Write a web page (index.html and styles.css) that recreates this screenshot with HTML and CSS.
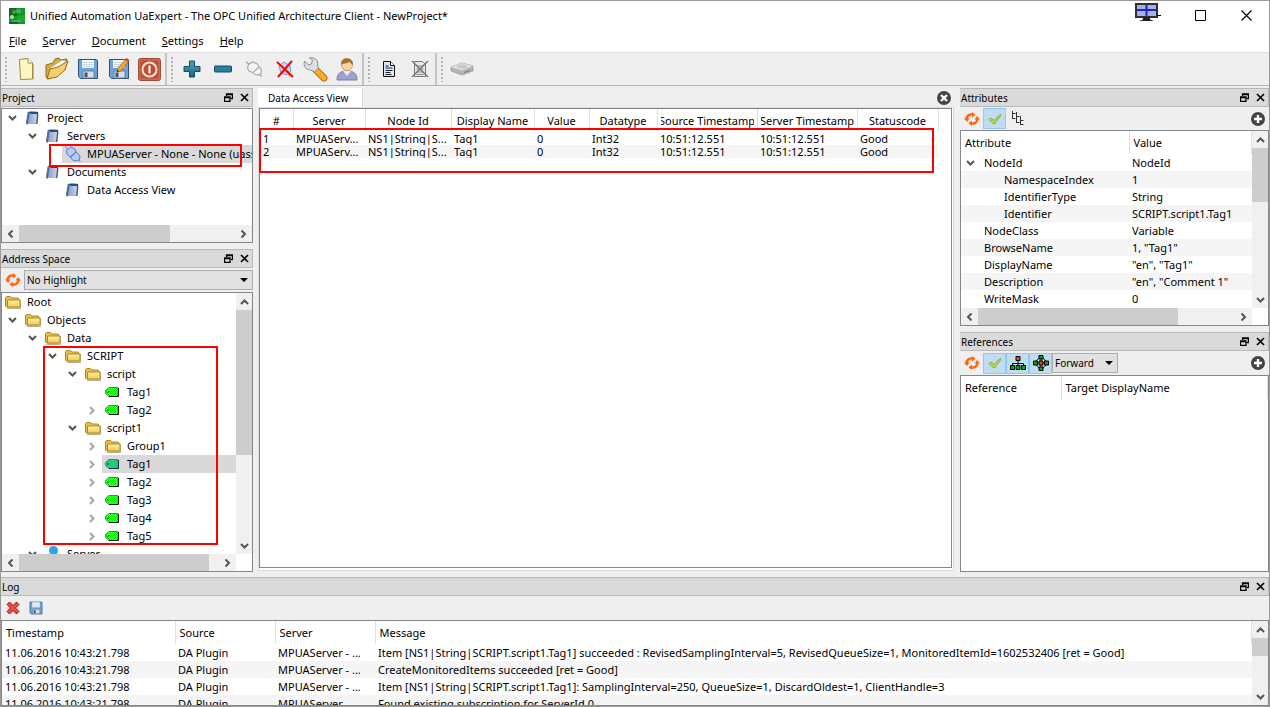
FILE: index.html
```html
<!DOCTYPE html>
<html lang="en">
<head>
    <meta charset="UTF-8">
    <meta name="viewport" content="width=device-width, initial-scale=1.0">
    <title>Unified Automation UaExpert</title>
    <link rel="stylesheet" href="styles.css">
</head>
<body>
    <!-- shared icons -->
    <svg class="sprite" width="0" height="0" aria-hidden="true">
        <defs>
            <linearGradient id="gFolder" x1="0" y1="0" x2="0" y2="1">
                <stop offset="0" stop-color="#fff3b0"/><stop offset="1" stop-color="#f0c850"/>
            </linearGradient>
            <linearGradient id="gBook" x1="0" y1="0" x2="1" y2="0">
                <stop offset="0" stop-color="#7f95c0"/><stop offset="1" stop-color="#d0dbee"/>
            </linearGradient>
            <linearGradient id="gBlue" x1="0" y1="0" x2="0" y2="1">
                <stop offset="0" stop-color="#4fa3c4"/><stop offset="1" stop-color="#1c6283"/>
            </linearGradient>
            <pattern id="pTag" width="2" height="2" patternUnits="userSpaceOnUse">
                <rect width="2" height="2" fill="#b4c4b4"/><rect width="1" height="1" fill="#00f000"/><rect x="1" y="1" width="1" height="1" fill="#00f000"/>
            </pattern>
            <pattern id="pTagSel" width="2" height="2" patternUnits="userSpaceOnUse">
                <rect width="2" height="2" fill="#6a9ec0"/><rect width="1" height="1" fill="#20c878"/><rect x="1" y="1" width="1" height="1" fill="#20c878"/>
            </pattern>
        </defs>
        <symbol id="down" viewBox="0 0 9 6"><path d="M1 1l3.500 3.500L8 1" fill="none" stroke="#555" stroke-width="2"/></symbol>
        <symbol id="right" viewBox="0 0 6 9"><path d="M1 1l3.500 3.500L1 8" fill="none" stroke="#a6a6a6" stroke-width="2"/></symbol>
        <symbol id="folder" viewBox="0 0 16 14">
            <path d="M2 13.500h13.500V5" fill="none" stroke="#8a7a50" stroke-width="1" opacity=".6"/>
            <path d="M.5 11V2.500l1-1h4l1.500 1.500h6l1 1v8H1.500z" fill="#e8bf4a" stroke="#b08820"/>
            <path d="M2.500 5h12.500v7H2.500z" fill="url(#gFolder)" stroke="#b08820"/>
        </symbol>
        <symbol id="book" viewBox="0 0 14 14">
            <path d="M3 1h10v2l-1 9.500H1.500z" fill="url(#gBook)" stroke="#8496b4" stroke-width=".6"/>
            <path d="M2.500 1.500L6 .5l7 .5v2L6 3z" fill="#1d4f82"/>
            <path d="M2.700 2L1 12.500l1.700 1.500L4.500 3z" fill="#4d6a94"/>
            <path d="M12.700 3l-1 10" stroke="#3c4a64" stroke-width="1.200"/>
        </symbol>
        <symbol id="plug" viewBox="0 0 16 16">
            <g fill="#b4ccf8" stroke="#5578c8"><path d="M1.500 4.500L5.500 1l4.500 2 1 3-6 5-3-2.500z"/><path d="M5.500 11.500L11.500 6l3.500 4-.5 3.500-3 1.500-3.500-.5z"/><path d="M.5.5l2 3M13.500 14l2 1.500" fill="none"/></g>
        </symbol>
        <symbol id="tag" viewBox="0 0 14 10">
            <path d="M4 .5h9v9H4L.5 6.500v-3z" fill="url(#pTag)" stroke="#707070"/><path d="M13.500 1v8.500H4" fill="none" stroke="#111"/><rect x="2" y="4" width="2" height="2" fill="#00c800"/>
        </symbol>
        <symbol id="tagsel" viewBox="0 0 14 10">
            <path d="M4 .5h9v9H4L.5 6.500v-3z" fill="url(#pTagSel)" stroke="#4878a0"/><path d="M13.500 1v8.500H4" fill="none" stroke="#103050"/><rect x="2" y="4" width="2" height="2" fill="#108860"/>
        </symbol>
        <symbol id="people" viewBox="0 0 16 16">
            <path d="M0 11c0-4 5-4 6-2v5H0z" fill="#f09060"/><path d="M10 9c1-2 6-2 6 2v3h-6z" fill="#60c070"/><circle cx="8.500" cy="4.500" r="4.500" fill="#28a8e8"/><path d="M4 15c0-7 9-7 9 0z" fill="#3c98d0"/>
        </symbol>
        <symbol id="refresh" viewBox="0 0 16 14">
            <g fill="none" stroke="#ff6410" stroke-width="2.400"><path d="M2.500 7.500C2.500 4 5 2 8.500 2.500"/><path d="M13.500 6.500c0 3.500-2.500 5.500-6 5"/></g>
            <path d="M0 6.500h5.500L3 10zM16 7.500h-5.500L13 4zM8 0l3.500 2.700L8 5.500zM8 8.500v5.500l-3.500-2.700z" fill="#ff6410"/>
        </symbol>
        <symbol id="check" viewBox="0 0 14 12"><path d="M1 6.500l2-1.500 3 2.500L12 1.500l1 .8L6.500 11H5.500z" fill="#b4dc3c" stroke="#7a9c30" stroke-width=".8"/></symbol>
        <symbol id="restore" viewBox="0 0 9 9"><path d="M2.500 3V1h6v4.500H7M.5 4h5.500v4.500H.5zM2.500 1.500h6M.5 4.500h5.500" fill="none" stroke="#000" stroke-width="1.300"/></symbol>
        <symbol id="cross" viewBox="0 0 9 9"><path d="M1 1l7 7M8 1l-7 7" stroke="#000" stroke-width="1.700"/></symbol>
        <symbol id="plusround" viewBox="0 0 14 14"><circle cx="7" cy="7" r="7" fill="#444"/><path d="M7 3v8M3 7h8" stroke="#fff" stroke-width="2.400"/></symbol>
        <symbol id="floppy" viewBox="0 0 22 22">
            <path d="M1.500 1.500h18l1 1v18h-17l-2-2z" fill="#6fa3d8" stroke="#2c5078"/>
            <path d="M5 2h12v8H5z" fill="#f2f7fc"/><path d="M5.500 4.500h11M5.500 6.500h11M5.500 8.500h11" stroke="#bcd0e4" stroke-width=".8"/>
            <path d="M6 13h11v7H6z" fill="#dadfe4" stroke="#5b6e84" stroke-width=".8"/><path d="M7.500 14.500h3v4.500h-3z" fill="#3c5878"/>
        </symbol>
        <symbol id="sheet" viewBox="0 0 14 18">
            <path d="M1.500 1.500h7l4 4v11h-11z" fill="#dce8ff" stroke="#111"/><path d="M8.500 1.500v4h4" fill="#fff" stroke="#111"/><path d="M3.500 6h3M3.500 8h7M3.500 10.500h7M3.500 12.500h5M3.500 14.500h6" stroke="#222"/>
        </symbol>
    </svg>

    <div class="window">
        <header class="titlebar">
            <svg class="logo" viewBox="0 0 16 16"><path d="M0 0h16v16H0z" fill="#083c10"/><path d="M0 0h7l9 7v9H0z" fill="#126a1c"/><path d="M7 0h9v16H9z" fill="#12962a"/><path d="M0 9l16-2v7H0z" fill="#1cae30" opacity=".7"/><circle cx="3" cy="9" r="2" fill="#b8d8b8"/><path d="M4 2v3h2V2M8 5V2h3v3M8 4h3M3 13h9" fill="none" stroke="#7cc888" stroke-width=".8"/></svg>
            <h1>Unified Automation UaExpert - The OPC Unified Architecture Client - NewProject*</h1>
            <div class="win-buttons">
                <button aria-label="Minimize"><svg class="monitor" width="27" height="19" viewBox="0 0 27 19"><path d="M1 1h21v13H1z" fill="#a8b0e4" stroke="#303030" stroke-width="2"/><path d="M11.500 2v11M2 7h19" stroke="#1828c0" stroke-width="2"/><path d="M8 14h7v2.500l4 1.500H4l4-1.500z" fill="#222"/><path d="M22 12.500h4" stroke="#000"/></svg></button>
                <button aria-label="Maximize"><svg width="11" height="11"><path d="M.5.500h10v10H.5z" fill="none" stroke="#000"/></svg></button>
                <button aria-label="Close"><svg width="11" height="11"><path d="M.5.500l10 10M10.500.500l-10 10" stroke="#000" stroke-width="1.100"/></svg></button>
            </div>
        </header>

        <nav class="menubar">
            <button><u>F</u>ile</button>
            <button><u>S</u>erver</button>
            <button><u>D</u>ocument</button>
            <button><u>S</u>ettings</button>
            <button><u>H</u>elp</button>
        </nav>

        <div class="toolbar">
            <div class="group">
                <button aria-label="New"><svg width="24" height="24" viewBox="0 0 24 24"><path d="M5.500 2.500L14 1.500l4.500 4.500v16l-12 .5z" fill="#fdf6c4" stroke="#a08c3c"/><path d="M14 1.500V6h4.500" fill="#fff" stroke="#a08c3c"/><path d="M19.500 7v15.500" stroke="#bbb"/></svg></button>
                <button aria-label="Open"><svg width="26" height="24" viewBox="0 0 26 24"><path d="M2 8l7-2 2-4 4-1 1 2 7-1-2 10L5 22l-3-2z" fill="#dca93a" stroke="#94701c"/><path d="M6 11L18 3l4 1-1 8-14 6z" fill="#fbfbf4" stroke="#b0a070" stroke-width=".7"/><path d="M3 22l3-10 8-2 10-6-3 9-8 7z" fill="#f4cf6c" stroke="#94701c"/></svg></button>
                <button aria-label="Save"><svg width="22" height="22"><use href="#floppy"/></svg></button>
                <button aria-label="Save As"><svg width="22" height="22" viewBox="0 0 22 22"><use href="#floppy"/><path d="M9 14l1-4 8-9 3 2-8 10z" fill="#f5a828" stroke="#8c5a14" stroke-width=".7"/><path d="M17 2l1.500-2L21.500 2 20 4z" fill="#d04830"/><path d="M9 14l.4-2 1.600 1.200z" fill="#222"/></svg></button>
                <button aria-label="Exit"><svg width="23" height="23" viewBox="0 0 23 23"><rect x=".5" y=".5" width="22" height="22" rx="2" fill="#cc6a4c" stroke="#a04c34"/><rect x="2.500" y="2.500" width="18" height="18" rx="2" fill="#bc5034"/><circle cx="11.500" cy="11.500" r="7" fill="none" stroke="#f8e0d8" stroke-width="2"/><path d="M11.500 7.500v8" stroke="#fff" stroke-width="2"/></svg></button>
            </div>
            <div class="group">
                <button aria-label="Add Server"><svg width="18" height="18" viewBox="0 0 18 18"><path d="M6.500 1h5v5.500H17v5h-5.500V17h-5v-5.500H1v-5h5.500z" fill="url(#gBlue)" stroke="#164a64"/></svg></button>
                <button aria-label="Remove Server"><svg width="18" height="8" viewBox="0 0 18 8"><rect x=".5" y="1" width="17" height="6" rx="1" fill="#2c7ea2" stroke="#164a64"/></svg></button>
                <button aria-label="Connect"><svg width="18" height="18" viewBox="0 0 18 18"><path d="M3.500 4.500l4-2.500 5 2 1.500 3-6 5.500-4-1.500-1.500-3zM1 1.500l3 3M14 7l2.500 3-.5 3.500-3 1.500-4-1M8 12.500l1.500 2M14.500 14.500l2.500 2" fill="#f4f4f4" stroke="#aaa" stroke-width="1.200"/></svg></button>
                <button aria-label="Disconnect"><svg width="18" height="18" viewBox="0 0 18 18"><path d="M3 6l5-4 6 4 1 5-5 4-5-2z" fill="#c8d0f4" stroke="#8090d0"/><path d="M11 12l4 4" stroke="#f0a020" stroke-width="3"/><path d="M1 2l16 15M16 1L2 17" stroke="#f00808" stroke-width="2"/></svg></button>
                <button aria-label="Properties"><svg width="25" height="25" viewBox="0 0 25 25"><path d="M13 13l8 8" stroke="#b87414" stroke-width="7" stroke-linecap="round"/><path d="M13 13l8 8" stroke="#fbac28" stroke-width="5" stroke-linecap="round"/><path d="M1.500 4l4 4 3-1 1-4-3-2c5-1 9 2 8 7l1 3-4 4-4-2C3 13 0 9 1.500 4z" fill="#dcdfe3" stroke="#878c94"/></svg></button>
                <button aria-label="Change User"><svg width="22" height="24" viewBox="0 0 22 24"><path d="M1 23c0-7 4-9 10-9s10 2 10 9z" fill="#9aa4cc" stroke="#7680aa"/><path d="M7 14h8l-4 5z" fill="#e8ecf8"/><circle cx="11" cy="8" r="5.500" fill="#fbd49c" stroke="#b88440" stroke-width=".6"/><path d="M5 8c-1-9 13-9 12 0-2-1-3-3-4-3-2 2-6 1-8 3z" fill="#a8702c"/></svg></button>
            </div>
            <div class="group">
                <button aria-label="Add Document"><svg width="14" height="18"><use href="#sheet"/></svg></button>
                <button aria-label="Remove Document"><svg width="18" height="18" viewBox="0 0 18 18"><path d="M3.500 1.500h8l3 3v12h-11z" fill="#e8e8e8" stroke="#777"/><path d="M5.500 6h7M5.500 9h7M5.500 12h7M5.500 14.500h7" stroke="#888"/><path d="M1 1l16 16M17 1L1 17" stroke="#777" stroke-width="1.500"/></svg></button>
            </div>
            <div class="group">
                <button aria-label="Add Driver"><svg width="24" height="14" viewBox="0 0 24 14"><path d="M1 5l11-4 11 3v5l-11 4L1 9z" fill="#b4b4b4" stroke="#8c8c8c" stroke-width=".6"/><path d="M1 5l11-4 11 3-11 4.500z" fill="#e0e0e0"/><ellipse cx="12" cy="4.500" rx="5" ry="2" fill="#c8c8c8"/><path d="M14 10.500l6-2" stroke="#777"/></svg></button>
            </div>
        </div>

        <main class="workspace">
            <div class="column left">
                <section class="dock project">
                    <div class="dock-title"><h2>Project</h2><button aria-label="Float"><svg width="9" height="9"><use href="#restore"/></svg></button><button aria-label="Close"><svg width="9" height="9"><use href="#cross"/></svg></button></div>
                    <div class="box">
                        <div class="view">
                            <ul class="tree">
                                <li><div class="node"><i><svg width="9" height="6"><use href="#down"/></svg></i><span><svg width="14" height="14"><use href="#book"/></svg>Project</span></div>
                                    <ul>
                                        <li><div class="node"><i><svg width="9" height="6"><use href="#down"/></svg></i><span><svg width="14" height="14"><use href="#book"/></svg>Servers</span></div>
                                            <ul>
                                                <li><div class="node selected"><i></i><span><svg width="16" height="16"><use href="#plug"/></svg>MPUAServer - None - None (uasserver)</span></div></li>
                                            </ul>
                                        </li>
                                        <li><div class="node"><i><svg width="9" height="6"><use href="#down"/></svg></i><span><svg width="14" height="14"><use href="#book"/></svg>Documents</span></div>
                                            <ul>
                                                <li><div class="node"><i></i><span><svg width="14" height="14"><use href="#book"/></svg>Data Access View</span></div></li>
                                            </ul>
                                        </li>
                                    </ul>
                                </li>
                            </ul>
                        </div>
                        <div class="hscroll"><button aria-label="Left"><svg width="9" height="6"><use href="#down"/></svg></button><div class="track"><div class="thumb thumb-project"></div></div><button aria-label="Right"><svg width="9" height="6"><use href="#down"/></svg></button></div>
                    </div>
                    <div class="mark mark-server"></div>
                </section>

                <section class="dock address">
                    <div class="dock-title"><h2>Address Space</h2><button aria-label="Float"><svg width="9" height="9"><use href="#restore"/></svg></button><button aria-label="Close"><svg width="9" height="9"><use href="#cross"/></svg></button></div>
                    <div class="dock-tools">
                        <button aria-label="Refresh"><svg width="16" height="14"><use href="#refresh"/></svg></button>
                        <div class="combo grow"><select aria-label="Highlight"><option>No Highlight</option></select></div>
                    </div>
                    <div class="box">
                        <div class="view">
                            <ul class="tree">
                                <li><div class="node"><span><svg width="16" height="14"><use href="#folder"/></svg>Root</span></div></li>
                                <li><div class="node"><i><svg width="9" height="6"><use href="#down"/></svg></i><span><svg width="16" height="14"><use href="#folder"/></svg>Objects</span></div>
                                    <ul>
                                        <li><div class="node"><i><svg width="9" height="6"><use href="#down"/></svg></i><span><svg width="16" height="14"><use href="#folder"/></svg>Data</span></div>
                                            <ul>
                                                <li><div class="node"><i><svg width="9" height="6"><use href="#down"/></svg></i><span><svg width="16" height="14"><use href="#folder"/></svg>SCRIPT</span></div>
                                                    <ul>
                                                        <li><div class="node"><i><svg width="9" height="6"><use href="#down"/></svg></i><span><svg width="16" height="14"><use href="#folder"/></svg>script</span></div>
                                                            <ul>
                                                                <li><div class="node"><i></i><span><svg width="14" height="10"><use href="#tag"/></svg>Tag1</span></div></li>
                                                                <li><div class="node"><i><svg width="6" height="9"><use href="#right"/></svg></i><span><svg width="14" height="10"><use href="#tag"/></svg>Tag2</span></div></li>
                                                            </ul>
                                                        </li>
                                                        <li><div class="node"><i><svg width="9" height="6"><use href="#down"/></svg></i><span><svg width="16" height="14"><use href="#folder"/></svg>script1</span></div>
                                                            <ul>
                                                                <li><div class="node"><i><svg width="6" height="9"><use href="#right"/></svg></i><span><svg width="16" height="14"><use href="#folder"/></svg>Group1</span></div></li>
                                                                <li><div class="node selected"><i><svg width="6" height="9"><use href="#right"/></svg></i><span><svg width="14" height="10"><use href="#tagsel"/></svg>Tag1</span></div></li>
                                                                <li><div class="node"><i><svg width="6" height="9"><use href="#right"/></svg></i><span><svg width="14" height="10"><use href="#tag"/></svg>Tag2</span></div></li>
                                                                <li><div class="node"><i><svg width="6" height="9"><use href="#right"/></svg></i><span><svg width="14" height="10"><use href="#tag"/></svg>Tag3</span></div></li>
                                                                <li><div class="node"><i><svg width="6" height="9"><use href="#right"/></svg></i><span><svg width="14" height="10"><use href="#tag"/></svg>Tag4</span></div></li>
                                                                <li><div class="node"><i><svg width="6" height="9"><use href="#right"/></svg></i><span><svg width="14" height="10"><use href="#tag"/></svg>Tag5</span></div></li>
                                                            </ul>
                                                        </li>
                                                    </ul>
                                                </li>
                                            </ul>
                                        </li>
                                        <li><div class="node"><i><svg width="9" height="6"><use href="#down"/></svg></i><span><svg width="16" height="16"><use href="#people"/></svg>Server</span></div></li>
                                    </ul>
                                </li>
                            </ul>
                        </div>
                        <div class="vscroll"><button aria-label="Up"><svg width="9" height="6"><use href="#down"/></svg></button><div class="track"><div class="thumb thumb-address-v"></div></div><button aria-label="Down"><svg width="9" height="6"><use href="#down"/></svg></button></div>
                        <div class="hscroll"><button aria-label="Left"><svg width="9" height="6"><use href="#down"/></svg></button><div class="track"><div class="thumb thumb-address-h"></div></div><button aria-label="Right"><svg width="9" height="6"><use href="#down"/></svg></button></div>
                    </div>
                    <div class="mark mark-script"></div>
                </section>
            </div>

            <section class="center">
                <div class="tabs">
                    <button class="tab">Data Access View</button>
                    <button class="tab-close" aria-label="Close tab"><svg width="14" height="14" viewBox="0 0 14 14"><circle cx="7" cy="7" r="7" fill="#444"/><path d="M4 4l6 6M10 4l-6 6" stroke="#fff" stroke-width="2.400"/></svg></button>
                </div>
                <div class="pane">
                    <div class="sheet">
                        <table class="data">
                            <colgroup><col class="c-num"><col class="c-server"><col class="c-node"><col class="c-name"><col class="c-value"><col class="c-type"><col class="c-time"><col class="c-time"><col class="c-status"></colgroup>
                            <thead>
                                <tr><th><div>#</div></th><th><div>Server</div></th><th><div>Node Id</div></th><th><div>Display Name</div></th><th><div>Value</div></th><th><div>Datatype</div></th><th><div>Source Timestamp</div></th><th><div>Server Timestamp</div></th><th><div>Statuscode</div></th></tr>
                            </thead>
                            <tbody>
                                <tr><td><div>1</div></td><td><div>MPUAServ...</div></td><td><div>NS1|String|S...</div></td><td><div>Tag1</div></td><td><div>0</div></td><td><div>Int32</div></td><td><div>10:51:12.551</div></td><td><div>10:51:12.551</div></td><td><div>Good</div></td></tr>
                                <tr><td><div>2</div></td><td><div>MPUAServ...</div></td><td><div>NS1|String|S...</div></td><td><div>Tag1</div></td><td><div>0</div></td><td><div>Int32</div></td><td><div>10:51:12.551</div></td><td><div>10:51:12.551</div></td><td><div>Good</div></td></tr>
                            </tbody>
                        </table>
                        <div class="mark mark-data"></div>
                    </div>
                </div>
            </section>

            <div class="column right">
                <section class="dock attributes">
                    <div class="dock-title"><h2>Attributes</h2><button aria-label="Float"><svg width="9" height="9"><use href="#restore"/></svg></button><button aria-label="Close"><svg width="9" height="9"><use href="#cross"/></svg></button></div>
                    <div class="dock-tools">
                        <button aria-label="Refresh"><svg width="16" height="14"><use href="#refresh"/></svg></button>
                        <button class="on" aria-label="Auto update"><svg width="14" height="12"><use href="#check"/></svg></button>
                        <button aria-label="Expand tree"><svg width="13" height="15" viewBox="0 0 13 15"><path d="M1.500 0v8M1.500 2.500h3M1.500 7.500h3M5.500 1v11M5.500 5.500h3M5.500 11.500h3M9.500 5v9M9.500 9.500h3M9.500 13.500h3" fill="none" stroke="#333"/></svg></button>
                        <button class="add" aria-label="Add"><svg width="14" height="14"><use href="#plusround"/></svg></button>
                    </div>
                    <div class="box">
                        <div class="view">
                            <table class="list">
                                <colgroup><col class="c-attr"><col></colgroup>
                                <thead><tr><th>Attribute</th><th>Value</th></tr></thead>
                                <tbody>
                                    <tr><td class="parent"><i><svg width="9" height="6"><use href="#down"/></svg></i>NodeId</td><td>NodeId</td></tr>
                                    <tr><td class="child">NamespaceIndex</td><td>1</td></tr>
                                    <tr><td class="child">IdentifierType</td><td>String</td></tr>
                                    <tr><td class="child">Identifier</td><td>SCRIPT.script1.Tag1</td></tr>
                                    <tr><td class="item">NodeClass</td><td>Variable</td></tr>
                                    <tr><td class="item">BrowseName</td><td>1, "Tag1"</td></tr>
                                    <tr><td class="item">DisplayName</td><td>"en", "Tag1"</td></tr>
                                    <tr><td class="item">Description</td><td>"en", "Comment 1"</td></tr>
                                    <tr><td class="item">WriteMask</td><td>0</td></tr>
                                </tbody>
                            </table>
                        </div>
                        <div class="vscroll"><button aria-label="Up"><svg width="9" height="6"><use href="#down"/></svg></button><div class="track"><div class="thumb thumb-attr-v"></div></div><button aria-label="Down"><svg width="9" height="6"><use href="#down"/></svg></button></div>
                        <div class="hscroll"><button aria-label="Left"><svg width="9" height="6"><use href="#down"/></svg></button><div class="track"><div class="thumb thumb-attr-h"></div></div><button aria-label="Right"><svg width="9" height="6"><use href="#down"/></svg></button></div>
                    </div>
                </section>

                <section class="dock references">
                    <div class="dock-title"><h2>References</h2><button aria-label="Float"><svg width="9" height="9"><use href="#restore"/></svg></button><button aria-label="Close"><svg width="9" height="9"><use href="#cross"/></svg></button></div>
                    <div class="dock-tools">
                        <button aria-label="Refresh"><svg width="16" height="14"><use href="#refresh"/></svg></button>
                        <button class="on" aria-label="Auto update"><svg width="14" height="12"><use href="#check"/></svg></button>
                        <button class="on" aria-label="Hierarchical"><svg width="16" height="14" viewBox="0 0 16 14"><path d="M8 4v5M2.500 10V7.500h11V10" fill="none" stroke="#000"/><path d="M6 .5h4v4H6z" fill="#f04010" stroke="#000"/><path d="M.5 9.500h4v4h-4zM6 9.500h4v4H6zM11.500 9.500h4v4h-4z" fill="#10a020" stroke="#000"/></svg></button>
                        <button class="on" aria-label="Non hierarchical"><svg width="16" height="16" viewBox="0 0 16 16"><circle cx="8" cy="8" r="5" fill="none" stroke="#000"/><path d="M8 4v8M4 8h8" stroke="#000"/><path d="M6 6h4v4H6z" fill="#f04010" stroke="#000"/><path d="M6 .5h4v3.500H6zM6 12h4v3.500H6zM.5 6h4v4h-4zM11.500 6h4v4h-4z" fill="#10a020" stroke="#000"/></svg></button>
                        <div class="combo"><select aria-label="Direction"><option>Forward</option></select></div>
                        <button class="add" aria-label="Add"><svg width="14" height="14"><use href="#plusround"/></svg></button>
                    </div>
                    <div class="box">
                        <div class="view">
                            <table class="list">
                                <colgroup><col class="c-ref"><col></colgroup>
                                <thead><tr><th>Reference</th><th>Target DisplayName</th></tr></thead>
                            </table>
                        </div>
                    </div>
                </section>
            </div>
        </main>

        <section class="dock log">
            <div class="dock-title"><h2>Log</h2><button aria-label="Float"><svg width="9" height="9"><use href="#restore"/></svg></button><button aria-label="Close"><svg width="9" height="9"><use href="#cross"/></svg></button></div>
            <div class="dock-tools">
                <button aria-label="Clear log"><svg width="14" height="14" viewBox="0 0 14 14"><path d="M3.500 1L7 4.500 10.500 1 13 3.500 9.500 7l3.500 3.500-2.500 2.500L7 9.500 3.500 13 1 10.500 4.500 7 1 3.500z" fill="#f04848" stroke="#a81010"/></svg></button>
                <button aria-label="Save log"><svg width="14" height="14"><use href="#floppy"/></svg></button>
            </div>
            <div class="box">
                <div class="view">
                    <table class="list">
                        <colgroup><col class="c-stamp"><col class="c-src"><col class="c-src"><col></colgroup>
                        <thead><tr><th>Timestamp</th><th>Source</th><th>Server</th><th>Message</th></tr></thead>
                        <tbody>
                            <tr><td>11.06.2016 10:43:21.798</td><td>DA Plugin</td><td>MPUAServer - ...</td><td>Item [NS1|String|SCRIPT.script1.Tag1] succeeded : RevisedSamplingInterval=5, RevisedQueueSize=1, MonitoredItemId=1602532406 [ret = Good]</td></tr>
                            <tr><td>11.06.2016 10:43:21.798</td><td>DA Plugin</td><td>MPUAServer - ...</td><td>CreateMonitoredItems succeeded [ret = Good]</td></tr>
                            <tr><td>11.06.2016 10:43:21.798</td><td>DA Plugin</td><td>MPUAServer - ...</td><td>Item [NS1|String|SCRIPT.script1.Tag1]: SamplingInterval=250, QueueSize=1, DiscardOldest=1, ClientHandle=3</td></tr>
                            <tr><td>11.06.2016 10:43:21.798</td><td>DA Plugin</td><td>MPUAServer - ...</td><td>Found existing subscription for ServerId 0</td></tr>
                        </tbody>
                    </table>
                </div>
                <div class="vscroll"><button aria-label="Up"><svg width="9" height="6"><use href="#down"/></svg></button><div class="track"><div class="thumb thumb-log"></div></div><button aria-label="Down"><svg width="9" height="6"><use href="#down"/></svg></button></div>
            </div>
        </section>
    </div>
</body>
</html>
```
FILE: styles.css
```css
* {
    box-sizing: border-box;
}

html, body {
    height: 100%;
    margin: 0;
}

body {
    font-family: "Noto Sans", "Open Sans", sans-serif;
    font-size: 11px;
    color: #000;
    background: #efefef;
    overflow: hidden;
}

button, select {
    font: inherit;
    color: inherit;
    margin: 0;
    padding: 0;
    border: 0;
    background: none;
}

svg {
    display: block;
    flex: none;
}

.sprite {
    position: absolute;
}

.window {
    display: flex;
    flex-direction: column;
    height: 100%;
    border: 1px solid #999;
}

/* title and menu */

.titlebar {
    display: flex;
    align-items: center;
    flex: none;
    height: 29px;
    padding-left: 8px;
    background: #fff;
}

.logo {
    width: 16px;
    height: 16px;
}

.titlebar h1 {
    flex: 1;
    margin: 0 0 0 5px;
    font-size: 11px;
    font-weight: normal;
    line-height: 16px;
}

.win-buttons {
    display: flex;
    height: 100%;
}

.win-buttons button {
    display: flex;
    align-items: center;
    justify-content: center;
    width: 46px;
}

.monitor {
    margin: 0 12px 6px 0;
}

.menubar {
    display: flex;
    flex: none;
    height: 22px;
    background: #fff;
}

.menubar button {
    padding: 0 8px 2px;
}

/* toolbar */

.toolbar {
    display: flex;
    flex: none;
    height: 34px;
    border-top: 1px solid #e0e0e0;
    border-bottom: 1px solid #b4b4b4;
}

.group {
    display: flex;
    border-right: 2px solid #c4c4c4;
}

.group:last-child {
    border-right: 0;
}

.group::before {
    content: "";
    width: 2px;
    margin: 4px 3px 3px 4px;
    background: repeating-linear-gradient(#b4b4b4 0 2px, transparent 2px 4px);
}

.group button {
    display: flex;
    align-items: center;
    justify-content: center;
    width: 31px;
}

/* docks */

.workspace {
    display: flex;
    flex: 1;
    min-height: 0;
    gap: 5px;
    padding: 2px 0 5px;
}

.column {
    display: flex;
    flex-direction: column;
    flex: none;
    gap: 6px;
}

.left {
    width: 252px;
}

.right {
    width: 309px;
    margin-left: 1px;
}

.dock {
    position: relative;
    display: flex;
    flex-direction: column;
    gap: 1px;
    min-height: 0;
}

.project {
    flex: 0 0 155px;
}

.attributes {
    flex: 0 0 238px;
}

.address, .references {
    flex: 1;
}

.log {
    flex: 0 0 129px;
}

.dock-title {
    display: flex;
    align-items: center;
    flex: none;
    height: 19px;
    background: #dadada;
    border: 1px solid #b9b9b9;
    border-left: 0;
}

.dock-title h2 {
    flex: 1;
    margin: 0;
    padding-left: 1px;
    font-size: 10px;
    font-weight: normal;
}

.dock-title button {
    display: flex;
    justify-content: center;
    width: 16px;
}

.dock-tools {
    display: flex;
    align-items: center;
    flex: none;
    height: 22px;
}

.attributes .dock-tools {
    height: 21px;
}

.dock-tools button {
    display: flex;
    align-items: center;
    justify-content: center;
    width: 23px;
    height: 21px;
}

.dock-tools .on {
    background: #bfdcf2;
    border: 1px solid #90c8f6;
}

.dock-tools .add {
    margin-left: auto;
}

.combo {
    position: relative;
    width: 66px;
    font-size: 10px;
}

.combo select {
    display: block;
    width: 100%;
    height: 20px;
    padding-left: 2px;
    appearance: none;
    background: #e1e1e1;
    border: 1px solid #adadad;
}

.combo::after {
    content: "";
    position: absolute;
    top: 8px;
    right: 5px;
    border: 4px solid transparent;
    border-top-color: #000;
    border-bottom: 0;
}

.grow {
    flex: 1;
}

.box {
    display: grid;
    grid-template-columns: minmax(0, 1fr) auto;
    grid-template-rows: minmax(0, 1fr) auto;
    flex: 1;
    min-height: 0;
    background: #fff;
    border: 1px solid #828790;
}

.view {
    overflow: hidden;
}

/* scroll bars */

.hscroll, .vscroll {
    display: flex;
    background: #f0f0f0;
}

.vscroll {
    grid-area: 1 / 2;
    flex-direction: column;
    width: 16px;
}

.hscroll {
    grid-area: 2 / 1;
    height: 17px;
}

.hscroll button, .vscroll button {
    display: flex;
    align-items: center;
    justify-content: center;
    flex: 0 0 17px;
}

.vscroll button:first-child svg {
    transform: rotate(180deg);
}

.hscroll button:first-child svg {
    transform: rotate(90deg);
}

.hscroll button:last-child svg {
    transform: rotate(-90deg);
}

.track {
    flex: 1;
    min-height: 0;
}

.thumb {
    width: 100%;
    height: 100%;
    background: #cdcdcd;
}

.thumb-project { width: 70%; }
.thumb-address-v { height: 64%; }
.thumb-address-h { width: 95%; }
.thumb-attr-v { height: 38%; }
.thumb-attr-h { width: 78%; }
.thumb-log { height: 36%; }

/* trees */

.tree, .tree ul {
    margin: 0;
    padding: 0;
    list-style: none;
}

.tree ul {
    padding-left: 20px;
}

.node {
    display: flex;
    height: 18px;
    line-height: 18px;
    white-space: nowrap;
}

.node i {
    display: flex;
    align-items: center;
    justify-content: center;
    flex: none;
    width: 20px;
}

.node span {
    display: flex;
    align-items: center;
    flex: 1;
    padding-left: 3px;
}

.node span svg {
    margin-right: 6px;
}

.node span svg[width="14"] {
    margin-right: 8px;
}

.selected span {
    background: #d9d9d9;
}

/* data access view */

.center {
    display: flex;
    flex-direction: column;
    flex: 1;
    min-width: 0;
}

.tabs {
    display: flex;
    align-items: center;
    justify-content: space-between;
    flex: none;
    height: 19px;
    padding-right: 3px;
}

.tab {
    align-self: stretch;
    padding: 0 14px 0 10px;
    font-size: 10px;
    background: #fff;
    border-right: 1px solid #d9d9d9;
}

.pane {
    flex: 1;
    min-height: 0;
    margin-bottom: 1px;
    padding: 0 1px 2px 0;
    border: 1px solid #dcdcdc;
    background: #fff;
}

.sheet {
    position: relative;
    height: 100%;
    border: 1px solid #828790;
}

table {
    border-collapse: collapse;
    table-layout: fixed;
    white-space: nowrap;
}

th {
    font-weight: normal;
}

.data {
    width: 678px;
}

.data th, .data td {
    padding: 0 3px;
}

.data th {
    height: 23px;
    border-right: 1px solid #e0e0e0;
}

.data div {
    display: flex;
    overflow: hidden;
}

.data th div {
    justify-content: center;
    line-height: 16px;
}

.data td div {
    height: 13px;
    line-height: 13px;
}

tbody tr:nth-child(even) {
    background: #f5f5f5;
}

.c-num { width: 33px; }
.c-server { width: 72px; }
.c-node { width: 86px; }
.c-name { width: 83px; }
.c-value { width: 55px; }
.c-type { width: 68px; }
.c-time { width: 100px; }
.c-status { width: 81px; }

/* attribute, reference and log lists */

.list {
    width: 100%;
}

.list th, .list td {
    padding: 0 4px 0 3px;
    overflow: hidden;
    text-align: left;
}

.list th {
    height: 23px;
    padding-left: 4px;
    border-right: 1px solid #e0e0e0;
}

.list td {
    height: 17px;
    line-height: 17px;
}

.list .item {
    padding-left: 23px;
}

.list .child {
    padding-left: 43px;
}

.list .parent {
    display: flex;
    align-items: center;
    padding-left: 0;
}

.parent i {
    display: flex;
    justify-content: center;
    width: 19px;
    margin-right: 4px;
}

.c-attr { width: 168px; }
.c-ref { width: 100px; }
.c-stamp { width: 173px; }
.c-src { width: 100px; }

/* highlight frames */

.mark {
    position: absolute;
    border: 2px solid #f00;
    pointer-events: none;
}

.mark-server {
    top: 56px;
    left: 48px;
    width: 193px;
    height: 23px;
}

.mark-script {
    top: 97px;
    left: 42px;
    width: 175px;
    height: 199px;
}

.mark-data {
    top: 19px;
    left: -1px;
    width: 675px;
    height: 45px;
}
```
